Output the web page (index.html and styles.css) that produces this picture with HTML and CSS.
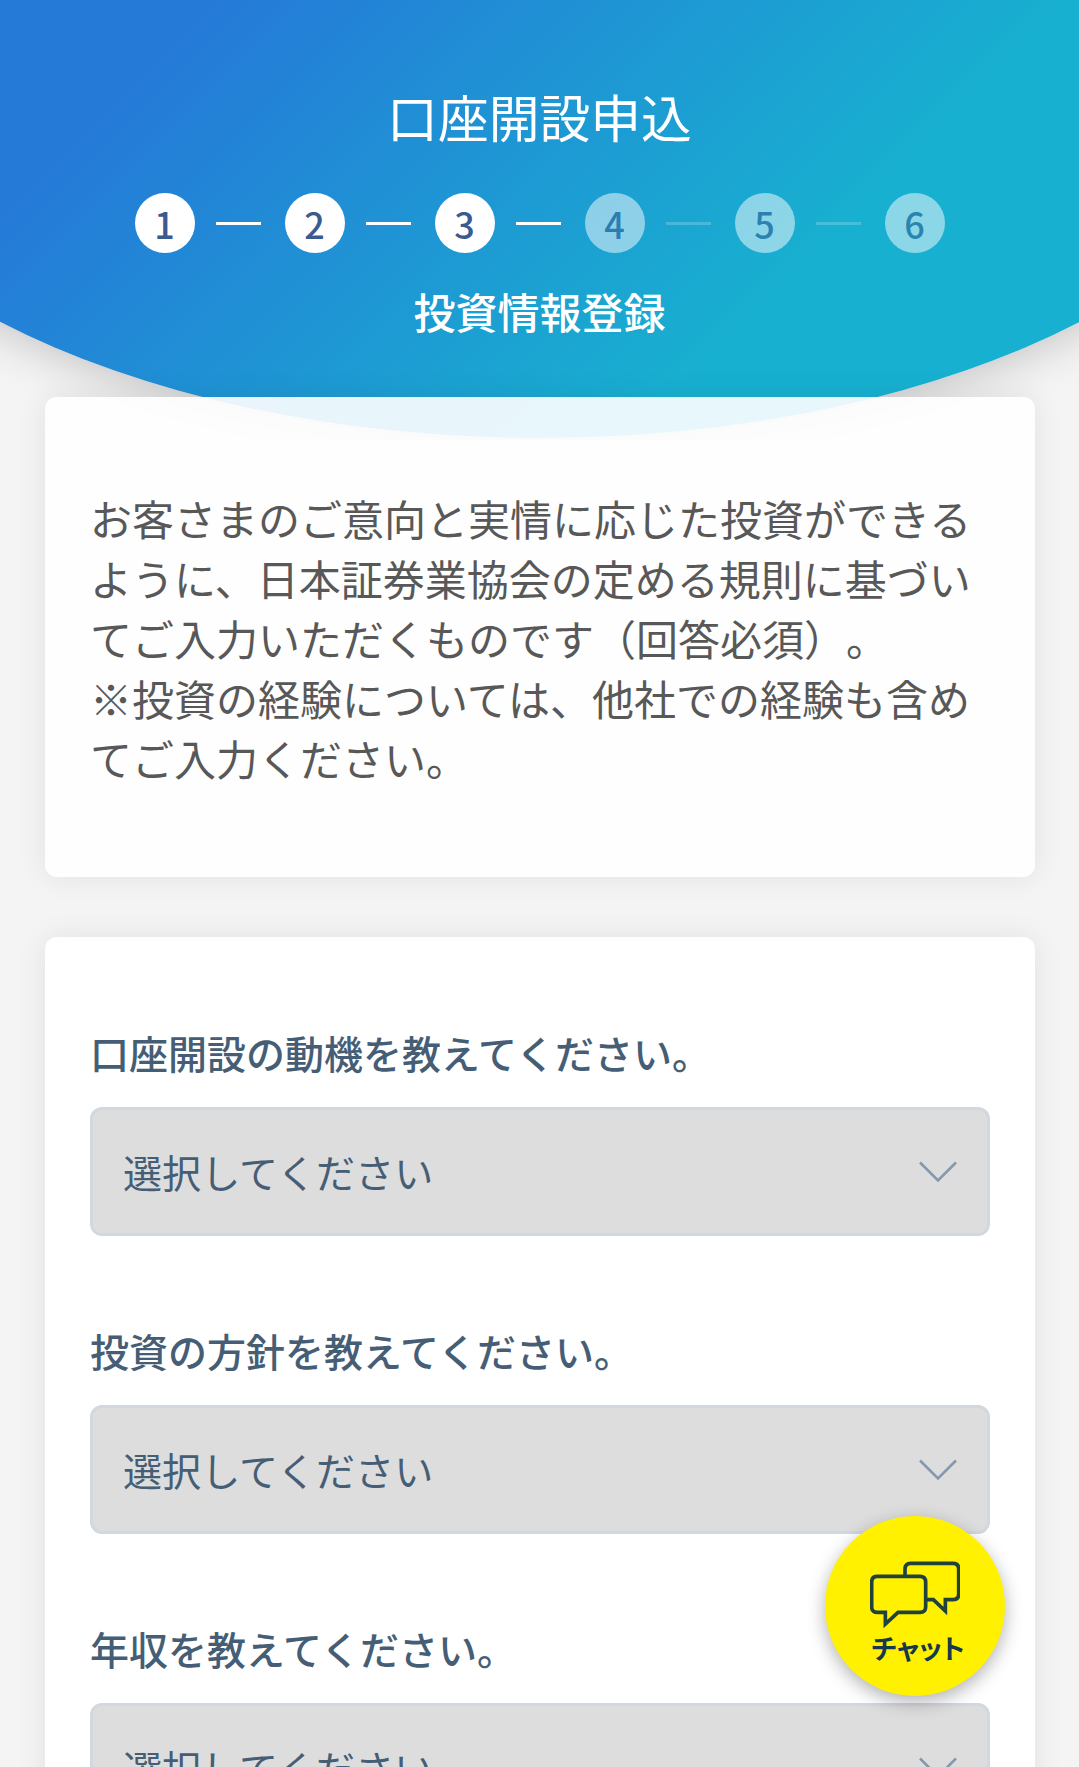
FILE: index.html
```html
<!DOCTYPE html>
<html lang="ja">
<head>
<meta charset="utf-8">
<title>口座開設申込</title>
<link rel="stylesheet" href="styles.css">
</head>
<body>
<div class="page">
  <div class="backdrop"><div class="arc"></div></div>
  <header class="header">
    <h1 class="title">口座開設申込</h1>
    <ol class="steps">
      <li class="step done">1</li>
      <li class="bar done"></li>
      <li class="step done">2</li>
      <li class="bar done"></li>
      <li class="step done">3</li>
      <li class="bar done"></li>
      <li class="step">4</li>
      <li class="bar"></li>
      <li class="step">5</li>
      <li class="bar"></li>
      <li class="step">6</li>
    </ol>
    <p class="subtitle">投資情報登録</p>
  </header>
  <main class="main">
    <section class="card intro">
      <p>お客さまのご意向と実情に応じた投資ができるように、日本証券業協会の定める規則に基づいてご入力いただくものです（回答必須）。<br>※投資の経験については、他社での経験も含めてご入力ください。</p>
    </section>
    <section class="card form">
      <div class="field">
        <div class="label">口座開設の動機を教えてください。</div>
        <div class="select"><span>選択してください</span><svg class="chevron" viewBox="0 0 38 22"><path d="M1 1.5 19 19.5 37 1.5"/></svg></div>
      </div>
      <div class="field">
        <div class="label">投資の方針を教えてください。</div>
        <div class="select"><span>選択してください</span><svg class="chevron" viewBox="0 0 38 22"><path d="M1 1.5 19 19.5 37 1.5"/></svg></div>
      </div>
      <div class="field">
        <div class="label">年収を教えてください。</div>
        <div class="select"><span>選択してください</span><svg class="chevron" viewBox="0 0 38 22"><path d="M1 1.5 19 19.5 37 1.5"/></svg></div>
      </div>
    </section>
  </main>
  <button class="chat" type="button">
    <svg class="chat-icon" viewBox="0 0 272 204">
      <path d="M105 43V24Q105 7 122 7H249Q266 7 266 24V99Q266 116 249 116H226V150L190 116H170"/>
      <path d="M22 46H150Q167 46 167 63V137Q167 154 150 154H84L46 189V154H22Q5 154 5 137V63Q5 46 22 46Z"/>
    </svg>
    <span class="chat-text">チャット</span>
  </button>
</div>
</body>
</html>
```
FILE: styles.css
```css
* { box-sizing: border-box; }
body {
  margin: 0;
  background: #f4f4f4;
  font-family: "Noto Sans CJK JP", sans-serif;
  text-spacing-trim: space-all;
  color: #585858;
}
h1, p, ol { margin: 0; padding: 0; }
.page {
  position: relative;
  height: 1767px;
  overflow: hidden;
}
/* Curved gradient behind the header; its shadow stops at the curve's lowest point */
.backdrop {
  position: absolute;
  left: 0;
  top: 0;
  width: 100%;
  height: 440px;
  overflow: hidden;
}
.arc {
  position: absolute;
  left: -226px;
  top: -362px;
  width: 1532px;
  height: 800px;
  border-radius: 50%;
  background: linear-gradient(135deg, #257ad8 34.5%, #18b0d0 71%);
  box-shadow: 0 30px 55px -35px rgba(0, 0, 0, .3);
}
.header {
  position: relative;
  height: 397px;
  padding-top: 80px;
  display: flex;
  flex-direction: column;
  align-items: center;
  color: #fff;
}
.title {
  font-size: 50.8px;
  font-weight: 400;
  line-height: 72px;
}
.steps {
  display: flex;
  align-items: center;
  list-style: none;
  margin-top: 41px;
}
.step {
  width: 60px;
  height: 60px;
  border-radius: 50%;
  background: #fff;
  color: #3c5a92;
  font-size: 36px;
  font-weight: 500;
  line-height: 60px;
  text-align: center;
  opacity: .5;
}
.bar {
  width: 45px;
  height: 3px;
  margin: 1px 24px 0 21px;
  background: #fff;
  opacity: .2;
}
.done { opacity: 1; }
.subtitle {
  margin-top: 28px;
  font-size: 42px;
  font-weight: 500;
  line-height: 60px;
}
.main {
  position: relative;
  display: flex;
  flex-direction: column;
  gap: 60px;
  padding: 0 44px 0 45px;
}
.card {
  border-radius: 12px;
  background: rgba(255, 255, 255, .9);
  box-shadow: 0 0 30px rgba(0, 0, 0, .08);
  padding: 0 45px;
}
.intro {
  height: 480px;
  padding-top: 91px;
  font-size: 42px;
  line-height: 60px;
}
.intro p { width: 890px; }
.form {
  background: #fff;
  padding-top: 85px;
  height: 1100px;
}
.label {
  font-size: 39px;
  font-weight: 500;
  line-height: 60px;
  color: #465e75;
  margin-bottom: 25px;
}
.select {
  display: flex;
  align-items: center;
  justify-content: space-between;
  height: 129px;
  margin-bottom: 84px;
  padding: 0 30px 0 30px;
  border: 3px solid #d1d8df;
  border-radius: 12px;
  background: #ddd;
  color: #465e75;
  font-size: 39.1px;
}
.select span { padding-bottom: 2px; }
.chevron {
  width: 38px;
  height: 22px;
  fill: none;
  stroke: #8599ae;
  stroke-width: 2.6;
}
.chat {
  position: absolute;
  left: 825px;
  top: 1516px;
  width: 180px;
  height: 180px;
  padding: 45px 0 0;
  border: 0;
  border-radius: 50%;
  background: #fff100;
  box-shadow: 0 6px 18px rgba(0, 0, 0, .3);
  display: flex;
  flex-direction: column;
  align-items: center;
  color: #17384a;
  font-family: inherit;
}
.chat-icon {
  width: 90.7px;
  height: 68px;
  fill: none;
  stroke: #21423a;
  stroke-width: 11;
}
.chat-text {
  margin-top: 1px;
  margin-left: 6px;
  font-size: 27px;
  font-weight: 700;
  line-height: 36px;
  font-feature-settings: "palt";
}
```
